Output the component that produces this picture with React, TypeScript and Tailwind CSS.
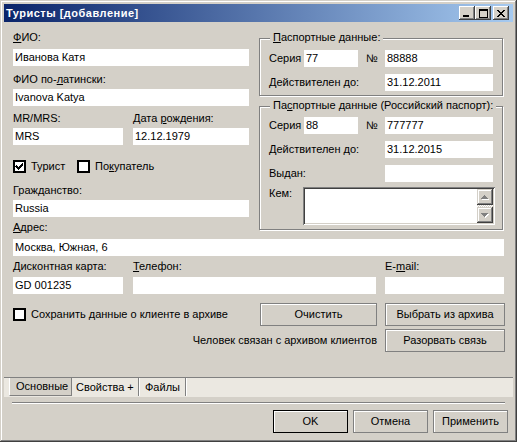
import React from "react";

const btnCls =
  "flex items-center justify-center bg-[#d4d0c8] border border-[#808080] shadow-[inset_1px_1px_0_#ffffff] h-[23px] leading-[13px]";

function Field({ value, w, className = "" }: { value?: string; w: string; className?: string }) {
  return (
    <div className={`h-[17px] bg-white pl-[2px] leading-[17px] whitespace-nowrap overflow-hidden ${w} ${className}`}>
      {value}
    </div>
  );
}

function Lbl({ children, className = "" }: { children: React.ReactNode; className?: string }) {
  return <div className={`h-[13px] leading-[13px] whitespace-nowrap ${className}`}>{children}</div>;
}

function U({ children }: { children: React.ReactNode }) {
  return <span className="underline underline-offset-[1px]">{children}</span>;
}

function Check({ checked }: { checked?: boolean }) {
  return (
    <div className="w-[13px] h-[13px] border-2 border-black bg-white flex items-center justify-center shrink-0">
      {checked && (
        <svg width="9" height="9" viewBox="0 0 9 9" shapeRendering="crispEdges">
          <path d="M1 3h1v1h1v1h1v-1h1v-1h1v-1h1v-1h1v3h-1v1h-1v1h-1v1h-1v1h-1v-1h-1v-1h-1v-1h-1z" fill="#000" />
        </svg>
      )}
    </div>
  );
}

function CapBtn({ children, className = "" }: { children: React.ReactNode; className?: string }) {
  return (
    <div
      className={`w-[16px] h-[14px] bg-[#d4d0c8] shadow-[inset_-1px_-1px_0_#404040,inset_1px_1px_0_#ffffff,inset_-2px_-2px_0_#808080,inset_2px_2px_0_#d4d0c8] flex items-center justify-center ${className}`}
    >
      {children}
    </div>
  );
}

function TitleBar() {
  return (
    <div className="h-[18px] flex items-center bg-[linear-gradient(to_right,#0a246a,#a6caf0)]">
      <div className="pl-[2px] text-white font-bold text-[11px] leading-[18px] tracking-[0.5px]">Туристы [добавление]</div>
      <div className="ml-auto flex items-center mr-[4px]">
        <CapBtn>
          <svg width="8" height="7" viewBox="0 0 8 7" shapeRendering="crispEdges">
            <rect x="0" y="5" width="6" height="2" fill="#000" />
          </svg>
        </CapBtn>
        <CapBtn>
          <svg width="9" height="9" viewBox="0 0 9 9" shapeRendering="crispEdges">
            <path d="M0 0h9v9h-9z M1 2v6h7v-6z" fill="#000" fillRule="evenodd" />
          </svg>
        </CapBtn>
        <CapBtn className="ml-[2px]">
          <svg width="8" height="7" viewBox="0 0 8 7" shapeRendering="crispEdges">
            <path
              d="M0 0h2v1h1v1h2v-1h1v-1h2v1h-1v1h-1v1h-1v1h1v1h1v1h1v1h-2v-1h-1v-1h-2v1h-1v1h-2v-1h1v-1h1v-1h1v-1h-1v-1h-1v-1h-1z"
              fill="#000"
            />
          </svg>
        </CapBtn>
      </div>
    </div>
  );
}

function Group({
  title,
  h,
  children,
}: {
  title: React.ReactNode;
  h: string;
  children: React.ReactNode;
}) {
  return (
    <div
      className={`relative w-[244px] ${h} border border-[#808080] shadow-[1px_1px_0_#ffffff,inset_1px_1px_0_#ffffff]`}
    >
      <span className="absolute left-[10px] top-[-8px] bg-[#d4d0c8] px-[3px] leading-[13px] whitespace-nowrap">
        {title}
      </span>
      {children}
    </div>
  );
}

function PassRow({ a, b }: { a: string; b: string }) {
  return (
    <div className="flex items-center h-[17px] pl-[9px]">
      <span className="w-[35px]">Серия</span>
      <Field value={a} w="w-[54px]" />
      <span className="ml-[8px] w-[19px]">№</span>
      <Field value={b} w="w-[108px]" />
    </div>
  );
}

function LabeledRow({ label, value, className = "" }: { label: string; value?: string; className?: string }) {
  return (
    <div className={`flex items-center h-[17px] pl-[9px] ${className}`}>
      <span className="w-[116px]">{label}</span>
      <Field value={value} w="w-[108px]" />
    </div>
  );
}

function ScrollBtn({ down }: { down?: boolean }) {
  return (
    <div className="w-[16px] h-[16px] bg-[#d4d0c8] shadow-[inset_-1px_-1px_0_#404040,inset_1px_1px_0_#d4d0c8,inset_-2px_-2px_0_#808080,inset_2px_2px_0_#ffffff] flex items-center justify-center">
      <svg width="8" height="5" viewBox="0 0 8 5" shapeRendering="crispEdges">
        {down ? (
          <>
            <path d="M1 1h7l-3.5 4z" fill="#ffffff" />
            <path d="M0 0h7l-3.5 4z" fill="#808080" />
          </>
        ) : (
          <>
            <path d="M4.5 1l3.5 4h-7z" fill="#ffffff" />
            <path d="M3.5 0l3.5 4h-7z" fill="#808080" />
          </>
        )}
      </svg>
    </div>
  );
}

export default function App() {
  return (
    <div
      className="w-[517px] h-[442px] bg-[#d4d0c8] text-[11px] text-black font-['Liberation_Sans',Arial,sans-serif] shadow-[inset_-1px_-1px_0_#404040,inset_1px_1px_0_#d4d0c8,inset_-2px_-2px_0_#808080,inset_2px_2px_0_#ffffff] pt-[4px] px-[4px] flex flex-col overflow-hidden"
    >
      <TitleBar />
      {/* top section */}
      <div className="flex h-[212px]">
        <div className="ml-[9px] w-[236px] flex flex-col">
          <Lbl className="mt-[9px]">
            <U>Ф</U>ИО:
          </Lbl>
          <Field value="Иванова Катя" w="w-[236px]" className="mt-[5px]" />
          <Lbl className="mt-[7px]">
            ФИО по-<U>л</U>атински:
          </Lbl>
          <Field value="Ivanova Katya" w="w-[236px]" className="mt-[3px]" />
          <div className="flex mt-[6px]">
            <Lbl className="w-[120px]">MR/MRS:</Lbl>
            <Lbl>
              Дата <U>р</U>ождения:
            </Lbl>
          </div>
          <div className="flex mt-[3px] gap-[10px]">
            <Field value="MRS" w="w-[110px]" />
            <Field value="12.12.1979" w="w-[116px]" />
          </div>
          <div className="flex items-center mt-[15px] h-[13px]">
            <Check checked />
            <span className="ml-[5px] w-[46px] leading-[13px]">Турист</span>
            <Check />
            <span className="ml-[5px] leading-[13px]">
              По<U>к</U>упатель
            </span>
          </div>
          <Lbl className="mt-[11px]">Гражданство:</Lbl>
          <Field value="Russia" w="w-[236px]" className="mt-[3px]" />
          <Lbl className="mt-[4px]">
            <U>А</U>дрес:
          </Lbl>
        </div>
        <div className="ml-[10px] flex flex-col">
          <div className="mt-[16px]">
            <Group title={<><U>П</U>аспортные данные:</>} h="h-[58px]">
              <div className="pt-[11px]">
                <PassRow a="77" b="88888" />
                <LabeledRow label="Действителен до:" value="31.12.2011" className="mt-[7px]" />
              </div>
            </Group>
          </div>
          <div className="mt-[10px]">
            <Group title={<>Па<U>с</U>портные данные (Российский паспорт):</>} h="h-[124px]">
              <div className="pt-[10px]">
                <PassRow a="88" b="777777" />
                <LabeledRow label="Действителен до:" value="31.12.2015" className="mt-[7px]" />
                <LabeledRow label="Выдан:" value="" className="mt-[7px]" />
                <div className="flex items-start pl-[9px] mt-[5px]">
                  <span className="w-[34px] leading-[13px]">Кем:</span>
                  <div className="w-[192px] h-[38px] bg-white shadow-[inset_1px_1px_0_#808080,inset_-1px_-1px_0_#ffffff,inset_2px_2px_0_#404040,inset_-2px_-2px_0_#d4d0c8] flex justify-end p-[2px]">
                    <div className="w-[16px] h-[34px] flex flex-col justify-between bg-[repeating-conic-gradient(#ffffff_0_25%,#d4d0c8_0_50%)] bg-[length:2px_2px]">
                      <ScrollBtn />
                      <ScrollBtn down />
                    </div>
                  </div>
                </div>
              </div>
            </Group>
          </div>
        </div>
      </div>

      <Field value="Москва, Южная, 6" w="w-[491px]" className="mt-[5px] ml-[9px]" />
      <div className="flex mt-[4px] ml-[9px]">
        <Lbl className="w-[120px]">
          <U>Д</U>исконтная карта:
        </Lbl>
        <Lbl className="w-[252px]">
          <U>Т</U>елефон:
        </Lbl>
        <Lbl>
          E-<U>m</U>ail:
        </Lbl>
      </div>
      <div className="flex mt-[4px] ml-[9px]">
        <Field value="GD 001235" w="w-[110px]" />
        <Field value="" w="w-[243px]" className="ml-[10px]" />
        <Field value="" w="w-[119px]" className="ml-[9px]" />
      </div>

      <div className="flex items-center mt-[9px] ml-[9px]">
        <div className="w-[247px] flex items-center">
          <Check />
          <span className="ml-[5px] leading-[13px]">Сохранить данные о клиенте в архиве</span>
        </div>
        <div className={`${btnCls} w-[117px]`}>Очистить</div>
        <div className={`${btnCls} w-[120px] ml-[8px]`}>Выбрать из архива</div>
      </div>
      <div className="flex items-center mt-[3px] ml-[9px]">
        <div className="w-[364px] text-right leading-[13px]">Человек связан с архивом клиентов</div>
        <div className={`${btnCls} w-[120px] ml-[8px]`}>Разорвать связь</div>
      </div>

      <div className="mt-[25px] h-[20px] bg-[#ebe8e1] border-t border-[#808080] flex items-stretch">
        <div className="ml-[5px] w-[63px] h-[18px] bg-[#d4d0c8] border-l border-white border-r border-b border-r-[#808080] border-b-[#808080] flex items-center pl-[6px] leading-[13px]">
          Основные
        </div>
        <div className="w-[67px] h-[18px] flex items-center pl-[4px] border-r border-[#808080] shadow-[1px_0_0_#ffffff] leading-[13px]">
          Свойства +
        </div>
        <div className="w-[46px] h-[18px] flex items-center pl-[5px] border-r border-[#808080] shadow-[1px_0_0_#ffffff] ml-[1px] leading-[13px]">
          Файлы
        </div>
      </div>

      <div className="mt-[5px] ml-[8px] w-[493px] h-[2px] border-t border-[#808080] border-b border-b-white" />

      <div className="flex mt-[6px] ml-[269px] gap-[5px]">
        <div className={`${btnCls} w-[75px] border-black shadow-[inset_1px_1px_0_#ffffff,inset_-1px_-1px_0_#808080]`}>OK</div>
        <div className={`${btnCls} w-[75px]`}>Отмена</div>
        <div className={`${btnCls} w-[75px]`}>Применить</div>
      </div>
    </div>
  );
}
